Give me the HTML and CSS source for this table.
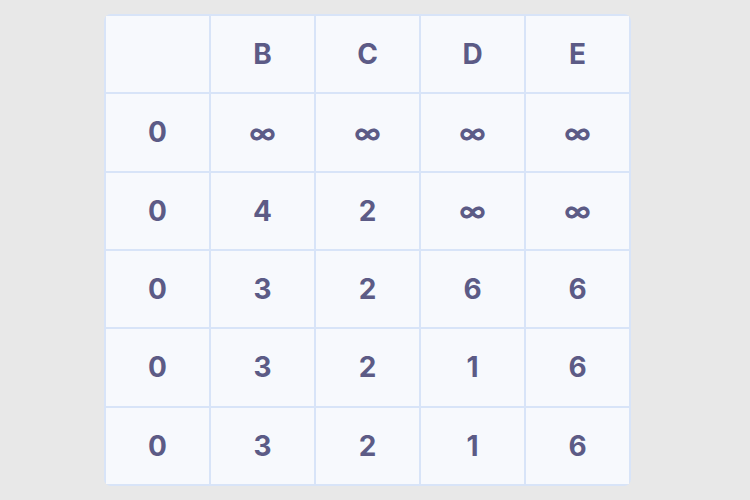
FILE: index.html
```html
<!DOCTYPE html>
<html>
<head>
<meta charset="utf-8">
<link rel="stylesheet" href="styles.css">
</head>
<body>
<div class="page">
  <div class="grid">
    <div class="cell"></div><div class="cell">B</div><div class="cell">C</div><div class="cell">D</div><div class="cell">E</div>
    <div class="cell">0</div><div class="cell inf">∞</div><div class="cell inf">∞</div><div class="cell inf">∞</div><div class="cell inf">∞</div>
    <div class="cell">0</div><div class="cell">4</div><div class="cell">2</div><div class="cell inf">∞</div><div class="cell inf">∞</div>
    <div class="cell">0</div><div class="cell">3</div><div class="cell">2</div><div class="cell">6</div><div class="cell">6</div>
    <div class="cell">0</div><div class="cell">3</div><div class="cell">2</div><div class="cell">1</div><div class="cell">6</div>
    <div class="cell">0</div><div class="cell">3</div><div class="cell">2</div><div class="cell">1</div><div class="cell">6</div>
  </div>
</div>
</body>
</html>
```
FILE: styles.css
```css
html, body {
  margin: 0;
  padding: 0;
  background: #e8e8e8;
}
.page {
  width: 750px;
  height: 500px;
  display: flex;
  padding: 14px 0 0 104px;
  box-sizing: border-box;
}
.grid {
  width: 527px;
  height: 472px;
  box-sizing: border-box;
  display: grid;
  grid-template-columns: repeat(5, 1fr);
  grid-template-rows: repeat(6, 1fr);
  gap: 2px;
  padding: 2px;
  background: #d8e4f8;
  border-radius: 7px;
  overflow: hidden;
}
.cell {
  background: #f7f9fd;
  display: flex;
  align-items: center;
  justify-content: center;
  font-family: Inter, "Noto Sans", sans-serif;
  font-weight: 700;
  font-size: 28px;
  color: #5c5b86;
}
.inf {
  font-size: 27px;
  padding-top: 2px;
}
```
